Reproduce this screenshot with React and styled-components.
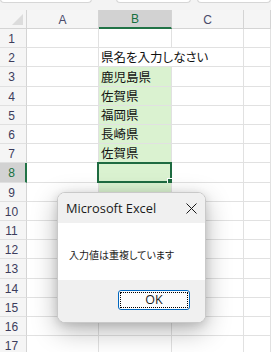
import React from 'react';
import styled, { createGlobalStyle } from 'styled-components';

const Global = createGlobalStyle`
  html, body {
    margin: 0;
    padding: 0;
    background: #ffffff;
    overflow: hidden;
  }
  body {
    font-family: "Noto Sans CJK JP", "Noto Sans", sans-serif;
  }
`;

const Page = styled.div`
  position: relative;
  width: 271px;
  height: 352px;
  overflow: hidden;
  background: #ffffff;
`;

const TabStrip = styled.div`
  height: 10px;
  background: #f3f3f3;
  display: flex;
  gap: 6px;
  overflow: hidden;
`;

const Tab = styled.div`
  width: ${p => p.w}px;
  height: 3px;
  margin-left: ${p => p.ml || 0}px;
  background: #ffffff;
  border: 1px solid #d6d6d6;
  border-top: none;
  border-radius: 0 0 4px 4px;
  margin-top: -1px;
`;

const Sheet = styled.div`
  display: grid;
  grid-template-columns: 27px 72px 73px 72px 1fr;
  grid-template-rows: 19px 19px 19px 20px 19px 19px 19px 19px 20px 19px 19px 19px 19px 20px 19px 19px 19px 19px;
  font-family: "Noto Sans CJK JP", sans-serif;
`;

const Corner = styled.div`
  background: #f5f5f5;
  border-right: 1px solid #d4d4d4;
  border-bottom: 1px solid #d4d4d4;
  position: relative;
  &::after {
    content: '';
    position: absolute;
    right: 3px;
    bottom: 3px;
    width: 0;
    height: 0;
    border-left: 11px solid transparent;
    border-bottom: 11px solid #dcdcdc;
  }
`;

const ColHead = styled.div`
  background: ${p => (p.active ? '#d2d2d2' : '#f5f5f5')};
  color: ${p => (p.active ? '#16703f' : '#4a4a6a')};
  border-right: 1px solid #d4d4d4;
  border-bottom: ${p => (p.active ? '2px solid #217346' : '1px solid #d4d4d4')};
  display: flex;
  align-items: center;
  justify-content: center;
  font-family: "Liberation Sans", Arial, sans-serif;
  font-size: 12px;
  box-sizing: border-box;
  padding-top: 1px;
`;

const RowHead = styled.div`
  background: ${p => (p.active ? '#d2d2d2' : '#f5f5f5')};
  color: ${p => (p.active ? '#16703f' : '#3c3c5c')};
  border-right: ${p => (p.active ? '2px solid #217346' : '1px solid #d4d4d4')};
  border-bottom: 1px solid #e0e0e0;
  display: flex;
  align-items: center;
  justify-content: center;
  padding-left: 2px;
  padding-right: ${p => (p.active ? 4 : 5)}px;
  font-family: "Liberation Sans", Arial, sans-serif;
  font-size: 12px;
  padding-top: 1px;
`;

const Cell = styled.div`
  position: relative;
  background: ${p => (p.fill ? '#daf2d0' : '#ffffff')};
  border-right: ${p => (p.open ? 'none' : '1px solid #e1e1e1')};
  border-bottom: 1px solid #e1e1e1;
  font-size: 12.5px;
  font-feature-settings: "palt";
  color: #111111;
  white-space: nowrap;
  display: flex;
  align-items: flex-end;
  padding-left: 2px;
  padding-bottom: 1px;
  line-height: 16px;
  z-index: ${p => (p.open ? 2 : 1)};
`;

const Selection = styled.div`
  position: absolute;
  left: -2px;
  top: -1px;
  right: -1px;
  bottom: -1px;
  border: 2px solid #1e6b41;
  pointer-events: none;
  z-index: 3;
  &::after {
    content: '';
    position: absolute;
    right: -4px;
    bottom: -4px;
    width: 5px;
    height: 5px;
    background: #1e6b41;
    border: 1px solid #ffffff;
  }
`;

const Dialog = styled.div`
  position: absolute;
  left: 57px;
  top: 192px;
  width: 149px;
  height: 131px;
  border: 1px solid #c9c9c9;
  border-radius: 8px;
  box-sizing: border-box;
  overflow: hidden;
  background: #ffffff;
  box-shadow: 0 8px 26px rgba(0, 0, 0, 0.28), 0 2px 8px rgba(0, 0, 0, 0.12);
  display: flex;
  flex-direction: column;
  z-index: 10;
`;

const TitleBar = styled.div`
  height: 30px;
  background: #f0f0f0;
  display: flex;
  align-items: center;
  justify-content: space-between;
  padding: 0 8px;
  font-family: "Open Sans", "Noto Sans", sans-serif;
  font-size: 12.8px;
  color: #1a1a1a;
`;

const Body = styled.div`
  flex: 1;
  background: #ffffff;
  display: flex;
  align-items: center;
  padding-left: 11px;
  padding-top: 6px;
  font-size: 10px;
  font-feature-settings: "palt";
  color: #1a1a1a;
`;

const Footer = styled.div`
  height: 42px;
  background: #f0f0f0;
  display: flex;
  justify-content: flex-end;
  align-items: flex-start;
  padding: 10px 15px 0 0;
  box-sizing: border-box;
`;

const OkButton = styled.button`
  width: 72px;
  height: 20px;
  border: 1px solid #0067c0;
  border-radius: 3px;
  background: #fdfdfd;
  padding: 1px;
  font-family: "Open Sans", "Noto Sans", sans-serif;
  font-size: 12.5px;
  color: #1a1a1a;
  display: flex;
`;

const Focus = styled.span`
  flex: 1;
  border: 1px dotted #000000;
  display: flex;
  align-items: center;
  justify-content: center;
  line-height: 1;
`;

const Close = () => (
  <svg width="11" height="11" viewBox="0 0 11 11">
    <path d="M0.5 0.5 L10.5 10.5 M10.5 0.5 L0.5 10.5" stroke="#1a1a1a" strokeWidth="1" />
  </svg>
);

const data = {
  2: '県名を入力しなさい',
  3: '鹿児島県',
  4: '佐賀県',
  5: '福岡県',
  6: '長崎県',
  7: '佐賀県',
};

const rows = Array.from({ length: 17 }, (_, i) => i + 1);

export default function App() {
  return (
    <Page>
      <Global />
      <TabStrip>
        <Tab w={100} />
        <Tab w={82} ml={18} />
        <Tab w={80} />
      </TabStrip>
      <Sheet>
        <Corner />
        <ColHead>A</ColHead>
        <ColHead active>B</ColHead>
        <ColHead>C</ColHead>
        <ColHead />
        {rows.map(r => (
          <React.Fragment key={r}>
            <RowHead active={r === 8}>{r}</RowHead>
            <Cell />
            <Cell fill={r >= 3 && r <= 12} open={r === 2}>
              {data[r]}
              {r === 8 && <Selection />}
            </Cell>
            <Cell />
            <Cell />
          </React.Fragment>
        ))}
      </Sheet>
      <Dialog>
        <TitleBar>
          <span>Microsoft Excel</span>
          <Close />
        </TitleBar>
        <Body>入力値は重複しています</Body>
        <Footer>
          <OkButton>
            <Focus>OK</Focus>
          </OkButton>
        </Footer>
      </Dialog>
    </Page>
  );
}
